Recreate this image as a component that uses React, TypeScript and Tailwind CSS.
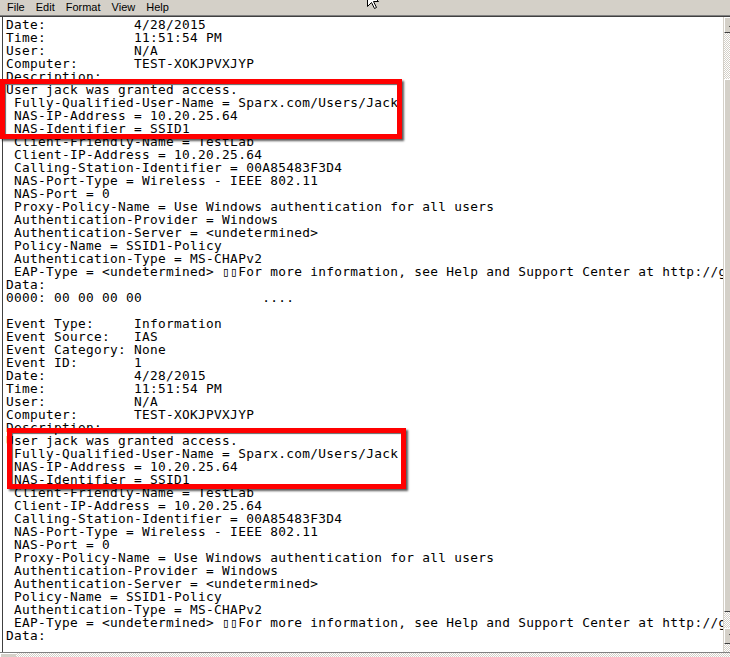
const header = [
  'Date:           4/28/2015',
  'Time:           11:51:54 PM',
  'User:           N/A',
  'Computer:       TEST-XOKJPVXJYP',
  'Description:',
]

const details = [
  'User jack was granted access.',
  ' Fully-Qualified-User-Name = Sparx.com/Users/Jack',
  ' NAS-IP-Address = 10.20.25.64',
  ' NAS-Identifier = SSID1',
  ' Client-Friendly-Name = TestLab',
  ' Client-IP-Address = 10.20.25.64',
  ' Calling-Station-Identifier = 00A85483F3D4',
  ' NAS-Port-Type = Wireless - IEEE 802.11',
  ' NAS-Port = 0',
  ' Proxy-Policy-Name = Use Windows authentication for all users',
  ' Authentication-Provider = Windows',
  ' Authentication-Server = <undetermined>',
  ' Policy-Name = SSID1-Policy',
  ' Authentication-Type = MS-CHAPv2',
  ' EAP-Type = <undetermined> \u25AF\u25AFFor more information, see Help and Support Center at http://go.microsoft.com/fwlink/events.asp.',
  'Data:',
]

const lines = [
  ...header,
  ...details,
  '0000: 00 00 00 00               ....',
  '',
  'Event Type:     Information',
  'Event Source:   IAS',
  'Event Category: None',
  'Event ID:       1',
  ...header,
  ...details,
]

const menu = ['File', 'Edit', 'Format', 'View', 'Help']

const checker = 'bg-[repeating-conic-gradient(#d4d0c8_0_25%,#ffffff_0_50%)] bg-[length:2px_2px]'

function ScrollButton({ down }: { down?: boolean }) {
  return (
    <div className="h-[16px] shrink-0 bg-[#d4d0c8] border-t border-l border-t-white border-l-white border-b border-r border-b-[#404040] border-r-[#404040] flex items-center justify-center">
      <svg width="7" height="4" viewBox="0 0 7 4">
        <path d={down ? 'M0 0h7L3.5 4z' : 'M0 4h7L3.5 0z'} fill="#000" />
      </svg>
    </div>
  )
}

export default function App() {
  return (
    <div className="relative w-[730px] h-[657px] overflow-hidden bg-[#d4d0c8] flex flex-col">
      {/* Menu bar */}
      <div className="h-[15px] shrink-0 flex items-center gap-[11px] pl-[7px] text-[11px] text-black font-['Liberation_Sans',Arial,sans-serif]">
        {menu.map((m) => (
          <span key={m}>{m}</span>
        ))}
      </div>
      <div className="h-px bg-[#808080] shrink-0" />
      <div className="h-px bg-[#404040] shrink-0" />

      {/* Editor + vertical scrollbar */}
      <div className="flex h-[635px] shrink-0">
        <div className="w-[723px] shrink-0 bg-white pl-[2px]">
          <div className="h-full border-l border-[#404040] pl-[3px] pt-[1px] overflow-hidden whitespace-pre text-black text-[12.8px] tracking-[0.3px] leading-[13px] font-['DejaVu_Sans_Mono',monospace]">
            {lines.map((l, i) => (
              <div key={i} className="h-[13px]">
                {l}
              </div>
            ))}
          </div>
        </div>
        <div className="w-[17px] shrink-0 flex flex-col border-l border-[#d4d0c8]">
          <ScrollButton />
          <div className={`h-[46px] shrink-0 ${checker}`} />
          <div className="flex-1 bg-[#d4d0c8] border-t border-l border-t-white border-l-white border-b border-b-[#404040]" />
          <div className={`h-[16px] shrink-0 ${checker}`} />
          <ScrollButton down />
          <div className={`h-[8px] shrink-0 ${checker}`} />
        </div>
      </div>

      {/* Horizontal scrollbar */}
      <div className="flex h-[17px] shrink-0 border-t border-[#808080]">
        <div className="w-[16px] shrink-0 bg-[#d4d0c8] border-t border-l border-t-white border-l-white flex items-center justify-center">
          <svg width="4" height="7" viewBox="0 0 4 7">
            <path d="M4 0v7L0 3.5z" fill="#000" />
          </svg>
        </div>
        <div className={`flex-1 ${checker}`} />
      </div>

      {/* Red highlight boxes */}
      <div className="absolute left-0 top-[79px] w-[402px] h-[60px] border-[5px] border-[#ff0000] shadow-[2px_2px_2px_rgba(0,0,0,0.65),inset_1px_1px_1px_rgba(0,0,0,0.6)]" />
      <div className="absolute left-[7px] top-[428px] w-[399px] h-[61px] border-[5px] border-[#ff0000] shadow-[2px_2px_2px_rgba(0,0,0,0.65),inset_1px_1px_1px_rgba(0,0,0,0.6)]" />

      {/* Mouse pointer */}
      <svg className="absolute left-[367px] top-[-10px]" width="13" height="20" viewBox="0 0 13 20">
        <path d="M0.5 0.5V16.5L4.5 12.5L7.5 18.5L9.5 17.5L6.5 11.5H11.5Z" fill="#fff" stroke="#000" strokeWidth="1" />
      </svg>
    </div>
  )
}
